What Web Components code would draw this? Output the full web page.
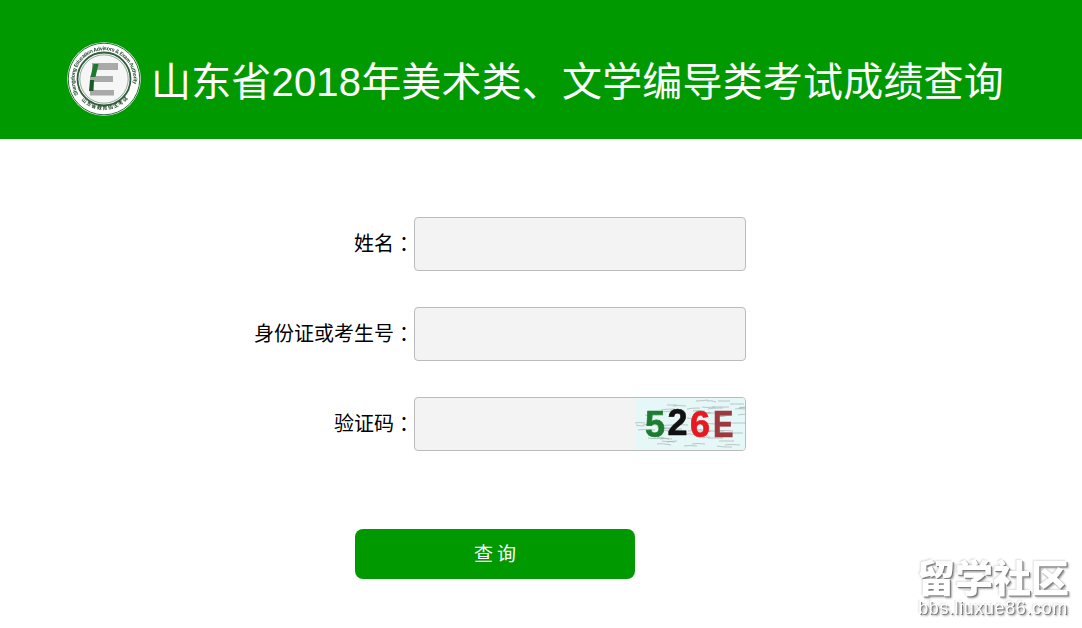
<!DOCTYPE html>
<html lang="zh-CN">
<head>
<meta charset="utf-8">
<title>成绩查询</title>
<style>
    html, body { margin: 0; height: 100%; overflow: hidden; background: #fff; }
    body { font-family: "Liberation Sans", "Noto Sans CJK SC", sans-serif; }
</style>
</head>
<body>
<score-page>
    <page-header slot="header">山东省2018年美术类、文学编导类考试成绩查询</page-header>
    <form-row label="姓名"></form-row>
    <form-row label="身份证或考生号"></form-row>
    <form-row label="验证码"><captcha-image slot="addon" code="526E"></captcha-image></form-row>
    <submit-button slot="action">查询</submit-button>
</score-page>
<site-watermark></site-watermark>

<script>
class ScorePage extends HTMLElement {
    constructor() {
        super();
        this.attachShadow({mode: "open"}).innerHTML = `
        <style>
            :host { display: block; }
            .rows { display: flex; flex-direction: column; gap: 36px; padding-top: 78px; }
            .action { padding: 78px 0 0 355px; }
        </style>
        <slot name="header"></slot>
        <div class="rows"><slot></slot></div>
        <div class="action"><slot name="action"></slot></div>
        `;
    }
}

class PageHeader extends HTMLElement {
    constructor() {
        super();
        this.attachShadow({mode: "open"}).innerHTML = `
        <style>
            :host {
                display: flex;
                align-items: center;
                gap: 10px;
                height: 139px;
                padding: 19px 0 0 67px;
                box-sizing: border-box;
                background: #009900;
                color: #fff;
                font-size: 40px;
                letter-spacing: .17px;
                white-space: nowrap;
            }
        </style>
        <school-logo></school-logo>
        <div><slot></slot></div>
        `;
    }
}

class SchoolLogo extends HTMLElement {
    constructor() {
        super();
        this.attachShadow({mode: "open"}).innerHTML = `
        <style>
            :host { display: block; width: 74px; height: 74px; flex: none; letter-spacing: 0; }
            svg { display: block; filter: blur(.3px); }
            text { font-family: "Liberation Sans", "Noto Sans CJK SC", sans-serif; font-weight: bold; fill: #24492e; }
        </style>
        <svg width="74" height="74" viewBox="0 0 74 74">
            <defs>
                <path id="top" d="M11.5 52.5 A29.5 29.5 0 1 1 62.5 52.5"/>
                <path id="bottom" d="M11 54 A31.5 31.5 0 0 0 63 54"/>
            </defs>
            <circle cx="37" cy="37" r="36.8" fill="#fff"/>
            <circle cx="37" cy="37" r="35.8" fill="none" stroke="#2f6b3c" stroke-width="1"/>
            <circle cx="37" cy="37" r="26.5" fill="#f6f6f6" stroke="#2f5c3a" stroke-width="1.8"/>
            <circle cx="37" cy="37" r="24.2" fill="none" stroke="#4c7a56" stroke-width=".6"/>
            <text font-size="5.4"><textPath href="#top" textLength="112" lengthAdjust="spacing">Shangdong Education Advisors &amp; Exam Authority</textPath></text>
            <text font-size="5" letter-spacing=".9"><textPath href="#bottom" startOffset="9%">山东省教育招生考试院</textPath></text>
            <rect x="25" y="21" width="26" height="7" fill="#a9a9a9"/>
            <rect x="23" y="34" width="23" height="6" fill="#a9a9a9"/>
            <rect x="23" y="48" width="24" height="5.5" fill="#a9a9a9"/>
            <path d="M26.5 22 L31.5 22 L28.5 35 L23.5 35 Z" fill="#1d7a2c"/>
            <path d="M23 38 L27 38 L26.5 49 L22 49 Z" fill="#1d5a2a"/>
        </svg>
        `;
    }
}

class FormRow extends HTMLElement {
    constructor() {
        super();
        this.attachShadow({mode: "open"}).innerHTML = `
        <style>
            :host {
                display: grid;
                grid-template-columns: 414px 332px;
                align-items: center;
                height: 54px;
            }
            label {
                text-align: right;
                font-size: 20px;
                color: #000;
                white-space: nowrap;
                padding-bottom: 2px;
            }
            .colon { font-family: "Noto Sans CJK TC", sans-serif; vertical-align: -1px; }
            .box {
                display: flex;
                height: 54px;
                box-sizing: border-box;
                background: #f3f3f3;
                border: 1px solid #bbb;
                border-radius: 4px;
                overflow: hidden;
            }
            input {
                flex: 1;
                min-width: 0;
                border: 0;
                padding: 0 10px;
                background: transparent;
                font: inherit;
                outline: 0;
            }
        </style>
        <label for="field"><span class="text"></span><span class="colon" lang="zh-Hant">：</span></label>
        <div class="box">
            <input id="field" type="text">
            <slot name="addon"></slot>
        </div>
        `;
        this.shadowRoot.querySelector('.text').textContent = this.getAttribute('label');
    }
}

class CaptchaImage extends HTMLElement {
    constructor() {
        super();
        // scribbles behind the code, same seed each time so the picture stays put
        let seed = 7;
        const rnd = n => { seed = (seed * 16807) % 2147483647; return seed % n; };
        let noise = '';
        for (let i = 0; i < 60; i++) {
            const x = rnd(105), y = 3 + rnd(46);
            noise += `<path d="M${x} ${y} q4 ${rnd(3) - 1} ${8 + rnd(10)} ${rnd(3) - 1}"/>`;
        }
        const colors = ['#1c7d30', '#111', '#e8181f', '#9c3a40'];
        const tops = [1, -1, 1, 1];
        const code = this.getAttribute('code') || '';
        const glyphs = [...code].map((c, i) =>
            `<span style="color:${colors[i]};top:${tops[i]}px">${c}</span>`).join('');
        this.attachShadow({mode: "open"}).innerHTML = `
        <style>
            :host {
                display: block;
                position: relative;
                width: 110px;
                height: 52px;
                flex: none;
                background: #e6f7f8;
                overflow: hidden;
            }
            svg { position: absolute; inset: 0; filter: blur(.6px); }
            path { fill: none; stroke: #a4b2b0; stroke-width: 1; opacity: .7; }
            .code {
                position: absolute;
                inset: 0;
                display: flex;
                align-items: center;
                padding-left: 10px;
                font: bold 36px/52px "Liberation Sans", sans-serif;
                letter-spacing: 2.5px;
                -webkit-text-stroke: .7px currentColor;
                filter: blur(.7px);
            }
            span { position: relative; display: block; -webkit-text-stroke: .7px; }
            span:last-child { letter-spacing: 0; transform: scaleX(.85); transform-origin: left; }
        </style>
        <svg width="110" height="52">${noise}</svg>
        <div class="code">${glyphs}</div>
        `;
    }
}

class SubmitButton extends HTMLElement {
    constructor() {
        super();
        this.attachShadow({mode: "open"}).innerHTML = `
        <style>
            :host { display: block; width: 280px; }
            button {
                display: block;
                width: 280px;
                height: 50px;
                padding: 0 0 3px 4px;
                border: 0;
                border-radius: 8px;
                background: #009900;
                color: #fff;
                font: 19px "Liberation Sans", "Noto Sans CJK SC", sans-serif;
                letter-spacing: 4px;
            }
        </style>
        <button type="button"><slot></slot></button>
        `;
    }
}

class SiteWatermark extends HTMLElement {
    constructor() {
        super();
        this.attachShadow({mode: "open"}).innerHTML = `
        <style>
            :host {
                position: absolute;
                left: 913px;
                top: 553px;
                width: 160px;
                color: #fff;
                text-align: center;
                white-space: nowrap;
                text-shadow: 1px 1px 0 #7c7c7c, 2px 2px 2px #a0a0a0, -1px -1px 2px #ddd;
                filter: blur(.4px);
            }
            .name { font: 900 38px/46px "Noto Sans CJK SC", sans-serif; }
            .url { font: 18px/18px "Liberation Sans", sans-serif; letter-spacing: .6px; }
        </style>
        <div class="name">留学社区</div>
        <div class="url">bbs.liuxue86.com</div>
        `;
    }
}

window.customElements.define('school-logo', SchoolLogo);
window.customElements.define('page-header', PageHeader);
window.customElements.define('score-page', ScorePage);
window.customElements.define('form-row', FormRow);
window.customElements.define('captcha-image', CaptchaImage);
window.customElements.define('submit-button', SubmitButton);
window.customElements.define('site-watermark', SiteWatermark);
</script>
</body>
</html>
